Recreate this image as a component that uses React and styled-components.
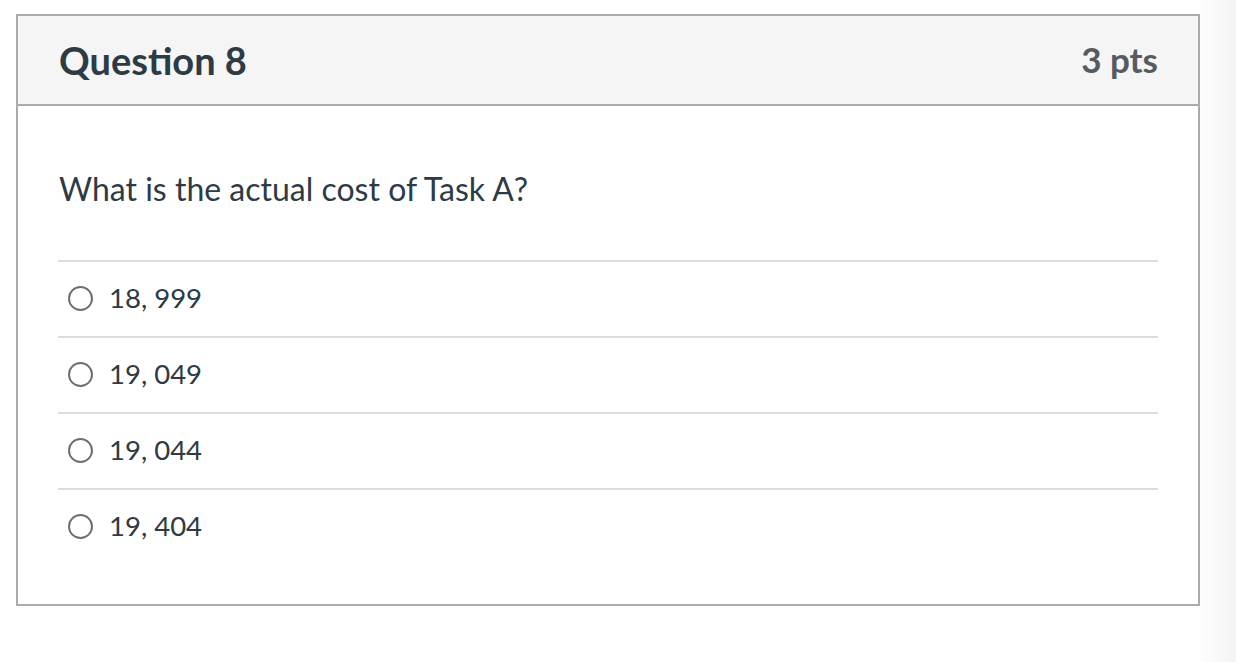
import React from "react";
import styled, { createGlobalStyle } from "styled-components";

const Global = createGlobalStyle`
  html, body { margin: 0; padding: 0; background: #ffffff; }
  body { font-family: Lato, "Open Sans", "Liberation Sans", sans-serif; }
`;

const Page = styled.div`
  display: flex;
  width: 1236px;
  height: 662px;
  overflow: hidden;
`;

const Main = styled.main`
  width: 1200px;
  flex: none;
  padding: 14px 0 0 16px;
  box-sizing: border-box;
`;

const SideStrip = styled.aside`
  flex: 1;
  background: linear-gradient(to right, #fdfdfd, #f4f4f4);
`;

const Card = styled.section`
  width: 1184px;
  height: 592px;
  box-sizing: border-box;
  border: 2px solid #ababab;
  display: flex;
  flex-direction: column;
`;

const Header = styled.header`
  height: 90px;
  box-sizing: border-box;
  background: #f5f5f5;
  border-bottom: 2px solid #ababab;
  display: flex;
  align-items: center;
  justify-content: space-between;
  padding: 0 40px 0 41px;
`;

const Title = styled.h2`
  margin: 0;
  font-family: Lato, sans-serif;
  font-weight: 700;
  font-size: 38px;
  line-height: 44px;
  color: #2d3b45;
`;

const Points = styled.div`
  font-family: Lato, sans-serif;
  font-weight: 700;
  font-size: 35px;
  line-height: 44px;
  margin-top: -2px;
  color: #555b60;
`;

const Body = styled.div`
  padding: 0 40px;
`;

const Prompt = styled.p`
  margin: 0;
  padding: 64px 0 0 1px;
  height: 154px;
  box-sizing: border-box;
  font-size: 32px;
  line-height: 38px;
  color: #2d3b45;
`;

const AnswerList = styled.ul`
  list-style: none;
  margin: 0;
  padding: 0;
`;

const Answer = styled.li`
  height: 76px;
  box-sizing: border-box;
  border-top: 2px solid #dcdcdc;
  display: flex;
  align-items: center;
  padding-left: 10px;
  gap: 16px;
  font-size: 27.5px;
  color: #2d3b45;
`;

const Label = styled.span`
  margin-top: -4px;
`;

const Radio = styled.span`
  width: 25px;
  height: 25px;
  box-sizing: border-box;
  border: 2px solid #6f6f6f;
  border-radius: 50%;
  flex: none;
  margin-top: -2px;
`;

const answers = ["18, 999", "19, 049", "19, 044", "19, 404"];

export default function App() {
  return (
    <>
      <Global />
      <Page>
        <Main>
          <Card>
            <Header>
              <Title>Question 8</Title>
              <Points>3 pts</Points>
            </Header>
            <Body>
              <Prompt>What is the actual cost of Task A?</Prompt>
              <AnswerList>
                {answers.map((a) => (
                  <Answer key={a}>
                    <Radio />
                    <Label>{a}</Label>
                  </Answer>
                ))}
              </AnswerList>
            </Body>
          </Card>
        </Main>
        <SideStrip />
      </Page>
    </>
  );
}
